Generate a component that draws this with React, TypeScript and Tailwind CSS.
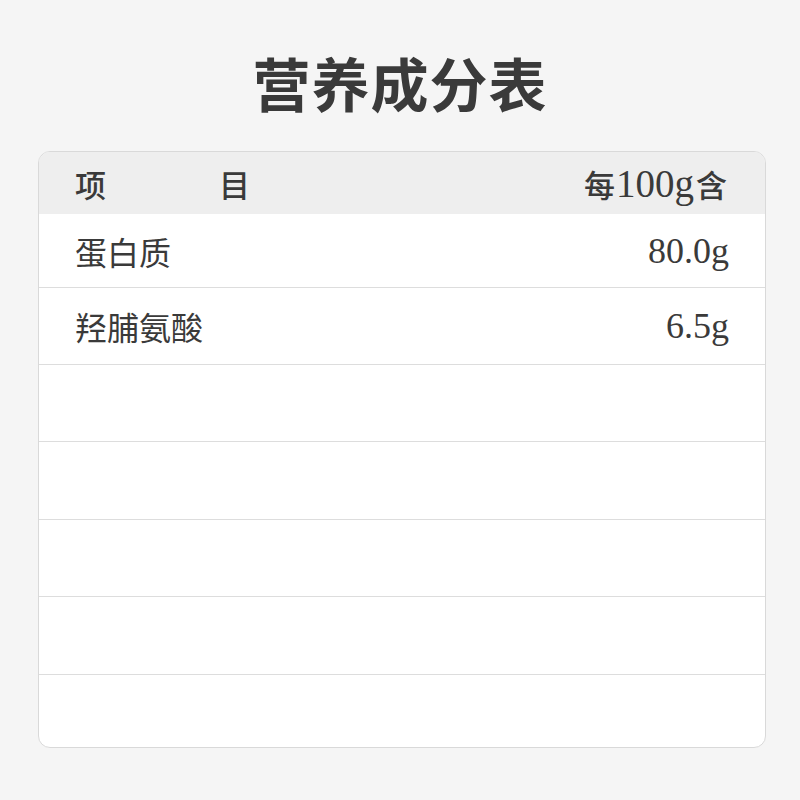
const rows: { name: string; value: string }[] = [
  { name: '蛋白质', value: '80.0g' },
  { name: '羟脯氨酸', value: '6.5g' },
  { name: '', value: '' },
  { name: '', value: '' },
  { name: '', value: '' },
  { name: '', value: '' },
  { name: '', value: '' },
]

const heights = ['h-[74px]', 'h-[77px]', 'h-[77px]', 'h-[78px]', 'h-[77px]', 'h-[78px]', 'h-[71px]']

const serif = { fontFamily: '"Liberation Serif", "Noto Sans CJK SC", serif' }

export default function App() {
  return (
    <div
      className="w-[800px] h-[800px] bg-[#f5f5f5] text-[#333333] flex flex-col"
      style={{ fontFamily: '"Noto Sans CJK SC", "Noto Sans", sans-serif' }}
    >
      {/* Title */}
      <div className="h-[151px] flex items-center justify-center pt-[12px]">
        <h1 className="text-[58px] font-bold leading-none text-[#3a3a3a] tracking-[1px]">营养成分表</h1>
      </div>

      {/* Table card */}
      <div className="ml-[38px] w-[728px] h-[597px] bg-white border border-[#d9d9d9] rounded-[12px] overflow-hidden flex flex-col">
        <div className="h-[62px] shrink-0 bg-[#eeeeee] flex items-center justify-between pl-[36px] pr-[38px] text-[31px] font-medium leading-none text-[#3a3a3a]">
          <div className="flex gap-[113px]">
            <span>项</span>
            <span>目</span>
          </div>
          <span className="flex items-baseline">
            <span>每</span>
            <span className="text-[39px] font-normal ml-[1px] mr-[2px]" style={serif}>100g</span>
            <span>含</span>
          </span>
        </div>
        {rows.map((r, i) => (
          <div
            key={i}
            className={`${heights[i]} shrink-0 flex items-center justify-between pl-[36px] pr-[36px] text-[32px] leading-none text-[#3a3a3a] ${
              i < rows.length - 1 ? 'border-b border-[#dddddd]' : ''
            }`}
          >
            <span>{r.name}</span>
            <span className="text-[36px]" style={serif}>{r.value}</span>
          </div>
        ))}
      </div>
    </div>
  )
}
